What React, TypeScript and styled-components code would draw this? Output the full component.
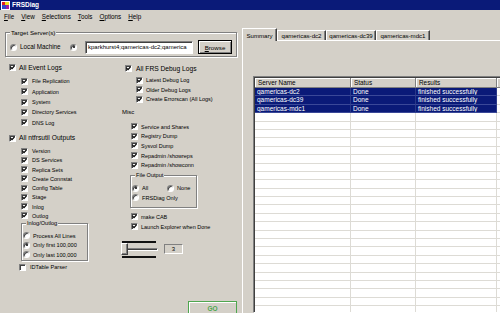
import React from "react";
import styled, { createGlobalStyle } from "styled-components";

const colors = {
  face: "#d4d0c8",
  shadow: "#808080",
  dark: "#404040",
  light: "#ffffff",
  navy: "#0a1a78",
  grid: "#dddbd5",
  green: "#4fa64f",
};

const GlobalStyle = createGlobalStyle`
  html, body { margin: 0; padding: 0; background: ${colors.face}; }
  body { font-family: "Liberation Sans", Arial, sans-serif; color: #000; }
  * { box-sizing: border-box; }
`;

const eventLogs = ["File Replication", "Application", "System", "Directory Services", "DNS Log"];
const ntfrsutil = ["Version", "DS Services", "Replica Sets", "Create Connstat", "Config Table", "Stage", "Inlog", "Outlog"];
const debugLogs = ["Latest Debug Log", "Older Debug Logs", "Create Errorscan (All Logs)"];
const misc = ["Service and Shares", "Registry Dump", "Sysvol Dump", "Repadmin /showreps", "Repadmin /showconn"];
const servers = ["qamericas-dc2", "qamericas-dc39", "qamericas-mdc1"];
const menus = ["File", "View", "Selections", "Tools", "Options", "Help"];

const CheckMark = () => (
  <svg width="5" height="5" viewBox="0 0 5 5">
    <path d="M0.6 2.2 L2 3.7 L4.5 0.8" fill="none" stroke="#000" strokeWidth="1.2" />
  </svg>
);

const Check = ({ checked = true }: { checked?: boolean }) => (
  <Box>{checked && <CheckMark />}</Box>
);

const Option = ({ label, h, indent, gap, size, mt, checked }: any) => (
  <CheckRow $h={h} $indent={indent} $mt={mt}>
    <Check checked={checked} />
    <RowText $gap={gap} $size={size}>{label}</RowText>
  </CheckRow>
);

const App = () => {
  return (
    <>
      <GlobalStyle />
      <Window>
        <TitleBar>
          <svg width="9" height="9" viewBox="0 0 9 9">
            <rect x="0" y="0" width="9" height="9" fill="#fff" />
            <rect x="1" y="1" width="3" height="3" fill="#e02020" />
            <rect x="4" y="1" width="4" height="3" fill="#f0e020" />
            <rect x="1" y="4" width="4" height="4" fill="#3048c8" />
            <rect x="5" y="4" width="3" height="4" fill="#a020a0" />
          </svg>
          <Title>FRSDiag</Title>
        </TitleBar>
        <MenuBar>
          {menus.map((m) => (
            <MenuItem key={m}>
              <u>{m[0]}</u>
              {m.slice(1)}
            </MenuItem>
          ))}
        </MenuBar>
        <Body>
          <LeftPane>
            <GroupBox $left={5} $width={232} $mt={4.5} $pt={4.5} $pb={2}>
              <GroupLegend $size={6.2}>Target Server(s)</GroupLegend>
              <TargetRow>
                <RadioDot />
                <RadioText $gap={3} $size={6.3} $w={50}>Local Machine</RadioText>
                <RadioDot $on />
                <ServerInput>kparkhurst4;qamericas-dc2;qamerica</ServerInput>
                <Button>
                  <u>B</u>rowse
                </Button>
              </TargetRow>
            </GroupBox>

            <Columns>
              <Column $w={115}>
                <Option label="All Event Logs" h={10} mt={5.5} indent={9} gap={3} size={6.7} />
                {eventLogs.map((l, i) => (
                  <Option key={l} label={l} h={10.3} mt={i === 0 ? 3.85 : 0} indent={21} gap={4} size={5.5} />
                ))}
                <Option label="All ntfrsutil Outputs" h={10} mt={5.65} indent={9} gap={3} size={6.7} />
                {ntfrsutil.map((l, i) => (
                  <Option key={l} label={l} h={9.25} mt={i === 0 ? 3.1 : 0} indent={21} gap={4} size={5.5} />
                ))}
                <GroupBox $left={21} $width={67} $mt={-0.5} $pt={4.1} $pb={0.5}>
                  <GroupLegend $size={5.6}>Inlog/Outlog</GroupLegend>
                  {["Process All Lines", "Only first 100,000", "Only last 100,000"].map((l, i) => (
                    <RadioRow key={l} $h={9.5}>
                      <RadioDot $on={i === 1} />
                      <RadioText $gap={3} $size={5.6}>{l}</RadioText>
                    </RadioRow>
                  ))}
                </GroupBox>
                <Option label="IDTable Parser" h={9} mt={1.75} indent={19} gap={4} size={5.6} checked={false} />
              </Column>

              <Column $w={126}>
                <Option label="All FRS Debug Logs" h={10} mt={6.5} indent={10} gap={4} size={6.7} />
                {debugLogs.map((l, i) => (
                  <Option key={l} label={l} h={9.4} mt={i === 0 ? 2.3 : 0} indent={21} gap={3} size={5.5} />
                ))}
                <SectionLabel>Misc</SectionLabel>
                {misc.map((l, i) => (
                  <Option key={l} label={l} h={9.6} mt={i === 0 ? 6 : 0} indent={16} gap={3} size={5.5} />
                ))}
                <GroupBox $left={15} $width={67} $mt={2.5} $pt={4.1} $pb={4.3}>
                  <GroupLegend $size={5.6}>File Output</GroupLegend>
                  <RadioRow $h={9.4}>
                    <RadioDot $on />
                    <RadioText $gap={3} $size={5.6} $w={25}>All</RadioText>
                    <RadioDot />
                    <RadioText $gap={3} $size={5.6}>None</RadioText>
                  </RadioRow>
                  <RadioRow $h={9.4}>
                    <RadioDot />
                    <RadioText $gap={3} $size={5.6}>FRSDiag Only</RadioText>
                  </RadioRow>
                </GroupBox>
                <Option label="make CAB" h={10} mt={4.1} indent={16} gap={3} size={5.5} />
                <Option label="Launch Explorer when Done" h={10} indent={16} gap={3} size={5.5} />
                <LevelRow>
                  <TrackBar>
                    <Tick />
                    <Track />
                    <Tick />
                    <Thumb />
                  </TrackBar>
                  <LevelBox>3</LevelBox>
                </LevelRow>
                <GoButton>GO</GoButton>
              </Column>
            </Columns>
          </LeftPane>

          <RightPane>
            <TabStrip>
              <Tab $active $w={35}>Summary</Tab>
              {servers.map((s, i) => (
                <Tab key={s} $w={[49, 50, 54][i]}>{s}</Tab>
              ))}
            </TabStrip>
            <TabPanel>
              <ListView>
                <HeaderRow>
                  <HeaderCell>Server Name</HeaderCell>
                  <HeaderCell>Status</HeaderCell>
                  <HeaderCell>Results</HeaderCell>
                  <HeaderCell />
                </HeaderRow>
                {servers.map((s) => (
                  <ListRow key={s}>
                    <Cell $sel>{s}</Cell>
                    <Cell $sel>Done</Cell>
                    <Cell $sel>finished successfully</Cell>
                    <Cell />
                  </ListRow>
                ))}
                {Array.from({ length: 24 }).map((_, i) => (
                  <ListRow key={i}>
                    <Cell />
                    <Cell />
                    <Cell />
                    <Cell />
                  </ListRow>
                ))}
              </ListView>
            </TabPanel>
          </RightPane>
        </Body>
      </Window>
    </>
  );
};

export default App;

const Window = styled.div`
  width: 500px;
  height: 313px;
  overflow: hidden;
  display: flex;
  flex-direction: column;
  background: ${colors.face};
`;

const TitleBar = styled.div`
  height: 10px;
  flex: none;
  display: flex;
  align-items: center;
  gap: 2px;
  padding-left: 1px;
  background: ${colors.navy};
`;

const Title = styled.span`
  color: #fff;
  font-weight: bold;
  font-size: 6.5px;
  line-height: 10px;
`;

const MenuBar = styled.div`
  height: 14px;
  flex: none;
  display: flex;
  align-items: center;
  gap: 7px;
  padding-left: 4px;
`;

const MenuItem = styled.span`
  font-size: 6.3px;
  line-height: 8px;
`;

const Body = styled.div`
  flex: 1;
  min-height: 0;
  display: flex;
`;

const LeftPane = styled.div`
  width: 241px;
  flex: none;
  display: flex;
  flex-direction: column;
`;

const GroupBox = styled.fieldset<{ $left: number; $width: number; $mt?: number; $pt: number; $pb: number }>`
  margin: ${(p) => p.$mt ?? 0}px 0 0 ${(p) => p.$left}px;
  width: ${(p) => p.$width}px;
  min-width: 0;
  padding: ${(p) => p.$pt}px 0 ${(p) => p.$pb}px 1px;
  border: 1px solid ${colors.shadow};
  box-shadow: inset 1px 1px 0 ${colors.light}, 1px 1px 0 ${colors.light};
`;

const GroupLegend = styled.legend<{ $size: number }>`
  font-size: ${(p) => p.$size}px;
  line-height: 7px;
  padding: 0 1px;
  margin-left: 3px;
  background: ${colors.face};
`;

const TargetRow = styled.div`
  height: 14px;
  display: flex;
  align-items: center;
  padding-left: 3px;
`;

const ServerInput = styled.div`
  flex: none;
  width: 108px;
  height: 13px;
  margin-left: 8px;
  padding: 0 0 0 2px;
  font-size: 6px;
  line-height: 11px;
  white-space: nowrap;
  overflow: hidden;
  background: #fff;
  border: 1px solid;
  border-color: ${colors.shadow} ${colors.light} ${colors.light} ${colors.shadow};
  box-shadow: inset 1px 1px 0 ${colors.dark};
`;

const Button = styled.div`
  flex: none;
  width: 34px;
  height: 14px;
  margin-left: 5px;
  display: flex;
  align-items: center;
  justify-content: center;
  font-size: 6.2px;
  border: 1px solid #000;
  box-shadow: inset 1px 1px 0 ${colors.light}, inset -1px -1px 0 ${colors.shadow};
`;

const Columns = styled.div`
  display: flex;
`;

const Column = styled.div<{ $w: number }>`
  width: ${(p) => p.$w}px;
  display: flex;
  flex-direction: column;
  align-items: flex-start;
`;

const CheckRow = styled.div<{ $h: number; $indent: number; $mt?: number }>`
  height: ${(p) => p.$h}px;
  margin-top: ${(p) => p.$mt ?? 0}px;
  padding-left: ${(p) => p.$indent}px;
  display: flex;
  align-items: center;
  white-space: nowrap;
`;

const Box = styled.span`
  width: 7px;
  height: 7px;
  flex: none;
  display: flex;
  align-items: center;
  justify-content: center;
  background: #fff;
  border: 1px solid;
  border-color: ${colors.shadow} ${colors.light} ${colors.light} ${colors.shadow};
  box-shadow: inset 1px 1px 0 ${colors.dark};
`;

const RowText = styled.span<{ $gap: number; $size: number }>`
  margin-left: ${(p) => p.$gap}px;
  font-size: ${(p) => p.$size}px;
  line-height: 8px;
`;

const RadioRow = styled.div<{ $h: number }>`
  height: ${(p) => p.$h}px;
  display: flex;
  align-items: center;
  white-space: nowrap;
`;

const RadioDot = styled.span<{ $on?: boolean }>`
  width: 7px;
  height: 7px;
  flex: none;
  border-radius: 50%;
  display: flex;
  align-items: center;
  justify-content: center;
  background: #fff;
  border: 1px solid;
  border-color: ${colors.shadow} ${colors.light} ${colors.light} ${colors.shadow};
  box-shadow: inset 1px 1px 0 ${colors.dark};
  &::after {
    content: "";
    width: 2px;
    height: 2px;
    border-radius: 50%;
    background: ${(p) => (p.$on ? "#000" : "transparent")};
  }
`;

const RadioText = styled.span<{ $gap: number; $size: number; $w?: number }>`
  flex: none;
  margin-left: ${(p) => p.$gap}px;
  font-size: ${(p) => p.$size}px;
  line-height: 8px;
  ${(p) => (p.$w ? `width: ${p.$w}px;` : "")}
`;

const SectionLabel = styled.div`
  height: 8px;
  margin-top: 4px;
  padding-left: 7px;
  font-size: 6px;
  line-height: 8px;
`;

const LevelRow = styled.div`
  height: 17px;
  margin-top: 9px;
  padding-left: 6px;
  display: flex;
  align-items: center;
`;

const TrackBar = styled.div`
  position: relative;
  width: 37px;
  height: 17px;
  display: flex;
  flex-direction: column;
  justify-content: space-between;
`;

const Tick = styled.div`
  width: 34px;
  height: 2px;
  margin-left: 1px;
  background: #111;
`;

const Track = styled.div`
  width: 37px;
  height: 3px;
  border: 1px solid;
  border-color: ${colors.shadow} ${colors.light} ${colors.light} ${colors.shadow};
  background: ${colors.dark};
`;

const Thumb = styled.div`
  position: absolute;
  left: 0;
  top: 2.5px;
  width: 7px;
  height: 12px;
  background: ${colors.face};
  border: 1px solid;
  border-color: ${colors.light} ${colors.dark} ${colors.dark} ${colors.light};
  box-shadow: inset -1px -1px 0 ${colors.shadow};
`;

const LevelBox = styled.div`
  width: 19px;
  height: 10.5px;
  margin-left: 6px;
  font-size: 6px;
  line-height: 8px;
  text-align: center;
  border: 1px solid;
  border-color: ${colors.shadow} ${colors.light} ${colors.light} ${colors.shadow};
`;

const GoButton = styled.div`
  width: 49px;
  height: 16px;
  margin: 43px 0 0 73px;
  display: flex;
  align-items: center;
  justify-content: center;
  color: ${colors.green};
  font-size: 6.5px;
  font-weight: bold;
  border: 1px solid ${colors.green};
  box-shadow: inset 1px 1px 0 ${colors.light};
`;

const RightPane = styled.div`
  flex: 1;
  min-width: 0;
  display: flex;
  flex-direction: column;
  padding: 4px 0 0 1px;
`;

const TabStrip = styled.div`
  height: 12px;
  flex: none;
  display: flex;
  align-items: flex-end;
  position: relative;
  z-index: 1;
`;

const Tab = styled.div<{ $active?: boolean; $w: number }>`
  width: ${(p) => p.$w}px;
  height: ${(p) => (p.$active ? 13 : 10)}px;
  margin-bottom: ${(p) => (p.$active ? -1 : 0)}px;
  display: flex;
  align-items: center;
  justify-content: center;
  white-space: nowrap;
  font-size: 6.1px;
  background: ${colors.face};
  border-top: 1px solid ${colors.light};
  border-left: 1px solid ${colors.light};
  border-right: 1px solid ${colors.dark};
  box-shadow: inset -1px 0 0 ${colors.shadow};
`;

const TabPanel = styled.div`
  flex: 1;
  min-height: 0;
  padding: 35px 0 0 10px;
  border-top: 1px solid ${colors.light};
  border-left: 1px solid ${colors.light};
`;

const ListView = styled.div`
  width: 262px;
  height: 100%;
  overflow: hidden;
  padding: 1px 0 0 1px;
  background: #fff;
  border: 1px solid;
  border-color: ${colors.shadow} ${colors.light} ${colors.light} ${colors.shadow};
  box-shadow: inset 1px 1px 0 ${colors.dark};
`;

const HeaderRow = styled.div`
  display: grid;
  grid-template-columns: 96px 65px 81px 60px;
  height: 10px;
`;

const HeaderCell = styled.div`
  padding-left: 3px;
  font-size: 6.4px;
  line-height: 9px;
  white-space: nowrap;
  background: ${colors.face};
  border-right: 1px solid ${colors.shadow};
  border-bottom: 1px solid ${colors.shadow};
  box-shadow: inset 1px 1px 0 ${colors.light};
`;

const ListRow = styled.div`
  display: grid;
  grid-template-columns: 96px 65px 81px 60px;
  height: 8.4px;
`;

const Cell = styled.div<{ $sel?: boolean }>`
  padding-left: 2px;
  font-size: 6.5px;
  line-height: 7.4px;
  white-space: nowrap;
  overflow: hidden;
  color: ${(p) => (p.$sel ? "#fff" : "#000")};
  background: ${(p) => (p.$sel ? colors.navy : "#fff")};
  border-right: 1px solid ${(p) => (p.$sel ? "#2a3888" : colors.grid)};
  border-bottom: 1px solid ${(p) => (p.$sel ? "#3a4898" : colors.grid)};
`;
